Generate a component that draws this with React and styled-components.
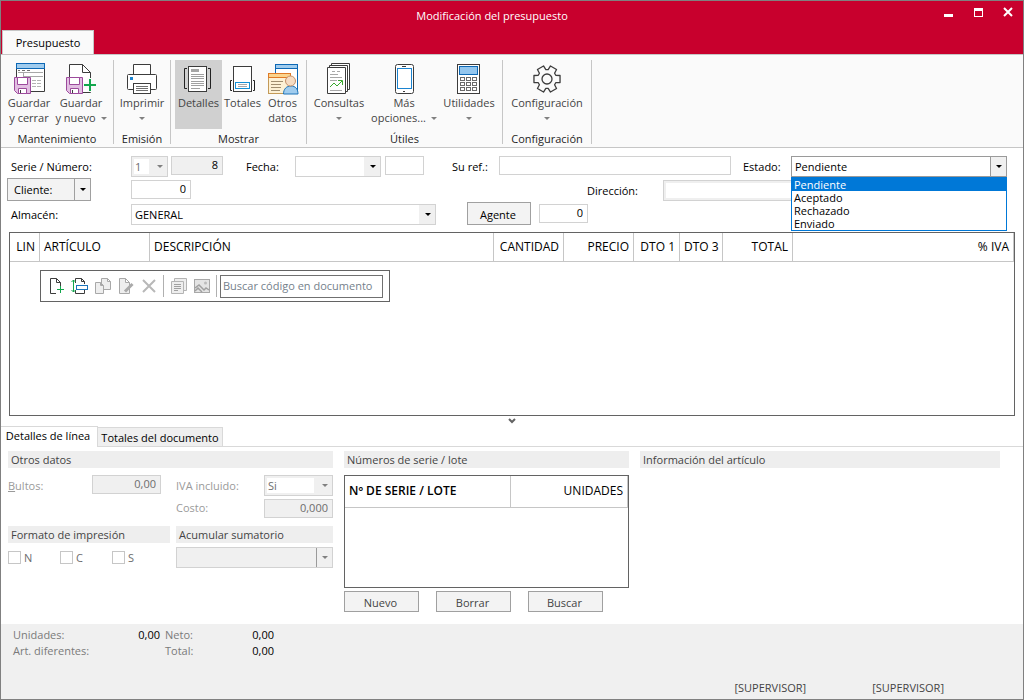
import React, { useState } from "react";
import styled, { createGlobalStyle, css } from "styled-components";

const GlobalStyle = createGlobalStyle`
* { box-sizing: border-box; }
body {
    margin: 0;
    background: #fff;
    color: #000;
    font-family: "Open Sans", "Noto Sans", sans-serif;
    font-size: 11px;
    line-height: 15px;
}
button, input, select {
    font: inherit;
    color: inherit;
    margin: 0;
    border-radius: 0;
}
button { cursor: pointer; }
`;

/* ---------- icons ---------- */

const Svg = ({ size = 34, children }) => (
    <svg width={size} height={size} viewBox={`0 0 ${size} ${size}`} fill="none" stroke="#3c3c3c" aria-hidden="true">
        {children}
    </svg>
);

const Floppy = () => (
    <g stroke="#9c4a9c">
        <path d="M2.5 16.5h16v16h-13l-3-3z" fill="#e2bfe2" />
        <path d="M5.5 16.5h10v7h-10z" fill="#fff" />
        <path d="M6.5 27.5h8v5h-8z" fill="#fff" />
        <path d="M8.5 29v3" stroke="#3c3c3c" />
    </g>
);

const SaveCloseIcon = () => (
    <Svg>
        <path d="M4.5 7v23.5h28V7" fill="#fff" />
        <rect x="4.5" y="2.5" width="28" height="5" fill="#a0ccee" stroke="#0d68b5" />
        <path d="M6 9.5h2m2 0h3m2 0h3" stroke="#707070" />
        <path d="M6 11.5h25M11.5 12v4M11 15.5h20" stroke="#a8a8a8" />
        <path d="M20 19.5h4m1 0h4M20 22.5h4m1 0h4M20 25.5h4m1 0h4" stroke="#b4b4b4" />
        <Floppy />
    </Svg>
);

const SaveNewIcon = () => (
    <Svg>
        <path d="M5.5 17V3.5h13l8 8V31.5H18" fill="#fff" />
        <path d="M18.5 3.5v8h8" />
        <Floppy />
        <path d="M26 17v14M19 24h14" stroke="#fafafa" strokeWidth="5" />
        <path d="M26 18v12M20 24h12" stroke="#12a64c" strokeWidth="2" />
    </Svg>
);

const PrinterIcon = () => (
    <Svg>
        <path d="M8.5 13V3.5h17V13" fill="#fff" />
        <rect x="2.5" y="13.5" width="29" height="15" rx="1" fill="#fff" />
        <rect x="5" y="16" width="3" height="3" fill="#1c84d0" stroke="none" />
        <rect x="8.5" y="22.5" width="17" height="10" fill="#fff" />
        <path d="M11 25.5h12M11 27.5h12M11 29.5h12" stroke="#707070" />
    </Svg>
);

const DetailsIcon = () => (
    <Svg>
        <rect x="6.5" y="5.5" width="18" height="25" fill="#fff" />
        <path d="M5 7.5H2.5v20H5M26 7.5h2.5v20H26" stroke="#222" />
        <rect x="9" y="8" width="8" height="3" fill="#a6a6a6" stroke="none" />
        <path d="M9 13.5h13M9 15.5h13M9 17.5h13M9 20.5h13M9 22.5h13M9 24.5h13M9 27.5h9" stroke="#a0a0a0" />
    </Svg>
);

const TotalsIcon = () => (
    <Svg>
        <rect x="7.5" y="5.5" width="18" height="25" fill="#fff" />
        <path d="M6 19.5H4.5v10H6M27 19.5h1.5v10H27" stroke="#222" />
        <rect x="9.5" y="21.5" width="14" height="6" stroke="#1590d6" />
        <path d="M12 23.5h9M12 25.5h9" stroke="#a8a8a8" />
    </Svg>
);

const OtherDataIcon = () => (
    <Svg>
        <rect x="9.5" y="3.5" width="22" height="26" fill="#fff" stroke="#0d68b5" />
        <rect x="9.5" y="3.5" width="22" height="4" fill="#a0ccee" stroke="#0d68b5" />
        <rect x="2.5" y="12.5" width="22" height="20" fill="#fdf1d5" stroke="#c39a58" />
        <rect x="2.5" y="12.5" width="22" height="4" fill="#fbd48d" stroke="#df7a26" />
        <path d="M5 20.5h12M5 23.5h10M5 26.5h10M5 29.5h9" stroke="#a08e70" />
        <path d="M17.5 33c0-5 3-8 7.5-8s7 3 7 8z" fill="#a0ccee" stroke="#1e74b8" />
        <circle cx="24.5" cy="20" r="5" fill="#f6dcc3" stroke="#c4916b" />
    </Svg>
);

const QueriesIcon = () => (
    <Svg>
        <path d="M9.5 2.5h18v26h-18z" fill="#fff" />
        <path d="M7.5 4.5h18v26h-18z" fill="#fff" />
        <path d="M5.5 6.5h18v26h-18z" fill="#fff" />
        <path d="M10 10.5h3m2 0h3M8 13.5h8M8 16.5h12M8 19.5h7M8 29.5h12" stroke="#a8a8a8" />
        <path d="M8 26l4-4 3 3 5-5M16 19.5h4.5V24" stroke="#3aa82f" />
    </Svg>
);

const PhoneIcon = () => (
    <Svg>
        <rect x="8.5" y="3.5" width="18" height="29" rx="2" fill="#fff" />
        <rect x="10.5" y="7.5" width="14" height="20" fill="#fff" stroke="#1c84d0" />
        <path d="M15 5.5h4M16 30.5h2" />
    </Svg>
);

const CalculatorIcon = () => (
    <Svg>
        <rect x="5.5" y="3.5" width="22" height="29" fill="#fff" />
        <rect x="7.5" y="5.5" width="18" height="8" fill="#93c6ee" stroke="#0d68b5" />
        {[16.5, 21.5, 26.5].map((y) =>
            [8.5, 14.5, 20.5].map((x) => <rect key={`${x}-${y}`} x={x} y={y} width="4" height="3" stroke="#6a6a6a" />)
        )}
    </Svg>
);

const GearIcon = () => {
    const points = [0, 60, 120, 180, 240, 300].flatMap((a) =>
        [[-23, 9.5], [-15, 13.5], [15, 13.5], [23, 9.5]].map(([d, r]) => {
            const t = ((a + d) * Math.PI) / 180;
            return `${17 + r * Math.cos(t)},${18 + r * Math.sin(t)}`;
        })
    );
    return (
        <Svg>
            <polygon points={points.join(" ")} strokeWidth="1.3" strokeLinejoin="round" />
            <circle cx="17" cy="18" r="5" strokeWidth="1.3" />
        </Svg>
    );
};

const NewLineIcon = () => (
    <Svg size={18}>
        <path d="M8 16.5H2.5v-15h6l4 4V9M8.5 1.5v4h4" />
        <path d="M12.5 9v7M9 12.5h7" stroke="#12a64c" />
    </Svg>
);

const InsertLineIcon = () => (
    <Svg size={18}>
        <path d="M4.5 6V1.5h6l3 3V7M10.5 1.5v3h3M4.5 13v3.5h9V13" />
        <path d="M2.5 3v12M.5 5l2-2 2 2M.5 13l2 2 2-2" stroke="#12a64c" />
        <rect x="5.5" y="8.5" width="11" height="4" fill="#fff" stroke="#1c74bb" />
    </Svg>
);

const CopyIcon = () => (
    <Svg size={18}>
        <g stroke="#a8a8a8" fill="#eee">
            <path d="M7.5 1.5h6l3 3v8h-9zM13.5 1.5v3h3" />
            <path d="M1.5 5.5h5l3 3v8h-8zM6.5 5.5v3h3" />
        </g>
    </Svg>
);

const EditIcon = () => (
    <Svg size={18}>
        <path d="M2.5 1.5h6l4 4v11h-10zM8.5 1.5v4h4" stroke="#a8a8a8" fill="#eee" />
        <path d="M8 14.5L15.5 7" stroke="#aaa" strokeWidth="3" />
    </Svg>
);

const DeleteIcon = () => (
    <Svg size={18}>
        <path d="M3 3l12 12M15 3L3 15" stroke="#b8b8b8" strokeWidth="2" />
    </Svg>
);

const NotesIcon = () => (
    <Svg size={18}>
        <g stroke="#b4b4b4" fill="#eee">
            <path d="M4.5 1.5h12v12h-12z" />
            <path d="M1.5 4.5h12v12h-12z" />
            <path d="M4 7.5h7M4 9.5h7M4 11.5h7M4 13.5h4" stroke="#a0a0a0" />
        </g>
    </Svg>
);

const ImageIcon = () => (
    <Svg size={18}>
        <rect x="1.5" y="2.5" width="15" height="13" fill="#e4e4e4" stroke="#a8a8a8" />
        <path d="M2 11l4-3 5 5 2-2 3 2M2 14l3-3 4 4" stroke="#a0a0a0" strokeWidth="1.5" />
        <circle cx="12.5" cy="6" r="1.5" fill="#bbb" stroke="none" />
    </Svg>
);

const Caret = styled.span`
    width: 0;
    height: 0;
    border: 3px solid transparent;
    border-top-color: ${({ $muted }) => ($muted ? "#808080" : "#000")};
    border-bottom: 0;
`;

/* ---------- window frame ---------- */

const Window = styled.div`
    min-height: 100vh;
    display: flex;
    flex-direction: column;
    border: 1px solid #808080;
    background: #fff;
`;

const TitleBar = styled.header`
    background: #c8002d;
    color: #fff;
`;

const TitleRow = styled.div`
    display: grid;
    grid-template-columns: 40px 1fr 80px;
    height: 29px;
    h1 {
        grid-column: 2;
        margin: 0;
        padding-top: 7px;
        font-size: 11px;
        font-weight: 400;
        text-align: center;
    }
`;

const WindowButtons = styled.div`
    display: flex;
    padding-top: 3px;
    button {
        flex: none;
        width: 30px;
        height: 16px;
        padding: 0;
        border: 0;
        background: none;
        text-align: left;
    }
    button:last-child { width: 20px; }
`;

const RibbonTabs = styled.nav`
    display: flex;
    padding-left: 1px;
    button {
        width: 92px;
        height: 24px;
        padding: 0;
        border: 1px solid #c6c6c6;
        border-bottom: 0;
        background: #fafafa;
        color: #000;
    }
`;

/* ---------- ribbon ---------- */

const RibbonBar = styled.div`
    display: flex;
    height: 94px;
    padding-top: 5px;
    background: #fafafa;
    border-top: 1px solid #c6c6c6;
    border-bottom: 1px solid #c6c6c6;
    margin-bottom: 8px;
`;

const Group = styled.section`
    width: ${({ $w }) => $w}px;
    height: 84px;
    border-right: 1px solid #c6c6c6;
    h2 {
        margin: 2px 0 0;
        font-size: 11px;
        font-weight: 400;
        line-height: 15px;
        text-align: center;
        color: #1e1e1e;
    }
`;

const GroupItems = styled.div`
    display: flex;
    padding-left: ${({ $pad = 3 }) => $pad}px;
`;

const RibbonItem = styled.button`
    display: flex;
    flex-direction: column;
    align-items: center;
    flex: none;
    width: ${({ $w }) => $w}px;
    height: 69px;
    padding: 1px 0 0;
    border: 0;
    background: ${({ $active }) => ($active ? "#d0d0d0" : "transparent")};
    color: #444;
    white-space: nowrap;
    svg { flex: none; }
    span.line {
        display: flex;
        align-items: center;
        justify-content: center;
        gap: 5px;
        height: 15px;
    }
    ${Caret} { margin-top: 2px; }
`;

/* ---------- form ---------- */

const disabledLook = css`
    background: #f0f0f0;
    color: #6d6d6d;
`;

const Label = styled.label`
    flex: none;
    width: ${({ $w }) => $w}px;
    padding-top: ${({ $top = 3 }) => $top}px;
    white-space: nowrap;
    color: ${({ $muted }) => ($muted ? "#9a9a9a" : "#000")};
`;

const TextBox = styled.input`
    flex: ${({ $grow }) => ($grow ? "1 1 0" : "none")};
    min-width: 0;
    width: ${({ $w }) => $w}px;
    height: ${({ $inset }) => ($inset ? 21 : 19)}px;
    padding: 0 4px 2px 1px;
    border: 1px solid #d2d2d2;
    background: #fff;
    box-shadow: ${({ $inset }) => ($inset ? "inset 0 0 0 2px #efefef" : "none")};
    outline: none;
    text-align: ${({ $grow }) => ($grow ? "left" : "right")};
    ${({ readOnly }) => readOnly && "background: #f0f0f0;"}
    &:disabled { ${disabledLook} }
`;

const ComboFrame = styled.div`
    position: relative;
    flex: none;
    display: flex;
    width: ${({ $w }) => $w}px;
    height: 21px;
    border: 1px solid ${({ $strong }) => ($strong ? "#9a9a9a" : "#d2d2d2")};
    background: ${({ $off }) => ($off ? "#f0f0f0" : "#fff")};
    select {
        flex: 1;
        min-width: 0;
        margin: ${({ $off }) => ($off ? "2px" : "0")};
        padding: 0 0 0 ${({ $off }) => ($off ? "1px" : "3px")};
        border: 0;
        outline: none;
        appearance: none;
        background: ${({ $blank }) => ($blank ? "#f0f0f0" : "#fff")};
        color: ${({ $off }) => ($off ? "#6d6d6d" : "#000")};
        opacity: 1;
    }
`;

const FormRow = styled.div`
    display: flex;
    align-items: flex-start;
    height: ${({ $low }) => ($low ? 24 : 22)}px;
    padding: 0 16px 0 10px;
    ${Label}, ${TextBox}, ${ComboFrame} {
        margin-top: ${({ $low }) => ($low ? 2 : 0)}px;
    }
`;

const ComboArrow = styled.span`
    display: flex;
    align-items: center;
    justify-content: center;
    width: 16px;
    background: #f0f0f0;
    border-left: 1px solid ${({ $line }) => ($line ? "#9a9a9a" : "#f0f0f0")};
    pointer-events: none;
`;

const OptionList = styled.ul`
    position: absolute;
    z-index: 2;
    top: 20px;
    left: -1px;
    right: -1px;
    margin: 0;
    padding: 0;
    list-style: none;
    background: #fff;
    border: 1px solid #0078d7;
    li {
        padding-left: 2px;
        line-height: 13px;
        &[aria-selected="true"] {
            background: #0078d7;
            color: #fff;
        }
    }
`;

const PushButton = styled.button`
    flex: none;
    width: ${({ $w = 75 }) => $w}px;
    height: ${({ $h = 21 }) => $h}px;
    padding: 1px 2px 0 0;
    border: 1px solid #a0a0a0;
    background: #f3f3f3;
    color: ${({ $soft }) => ($soft ? "#444" : "#000")};
`;

const SplitButton = styled.div`
    flex: none;
    display: flex;
    width: 84px;
    height: 23px;
    margin: 0 40px 0 -4px;
    border: 1px solid #a0a0a0;
    button {
        display: flex;
        align-items: center;
        padding: 0 6px;
        border: 0;
        background: #f3f3f3;
    }
    button:first-child { flex: 1; }
    button:last-child {
        width: 16px;
        padding: 0;
        justify-content: center;
        border-left: 1px solid #a0a0a0;
    }
`;

const Space = styled.span`
    flex: none;
    width: ${({ $w }) => $w}px;
`;

/* ---------- tables ---------- */

const GridBox = styled.div`
    flex: ${({ $grow }) => ($grow ? "1 0 184px" : "0 0 113px")};
    margin: ${({ $grow }) => ($grow ? "6px 8px 0" : "0")};
    border: 1px solid #636363;
    table {
        width: 100%;
        border-collapse: separate;
        border-spacing: 0;
        table-layout: fixed;
    }
    th {
        height: ${({ $grow }) => ($grow ? 29 : 32)}px;
        padding: 0 4px 2px;
        border-right: 1px solid #c6c6c6;
        border-bottom: 1px solid #c6c6c6;
        font-size: 12px;
        font-weight: 400;
        text-align: right;
        white-space: nowrap;
    }
    th.left { text-align: left; }
    th.key { font-weight: 600; }
`;

const LineTools = styled.div`
    display: flex;
    align-items: center;
    width: 350px;
    height: 32px;
    margin: 8px 0 0 30px;
    padding: 0 6px 0 4px;
    border: 1px solid #636363;
    button {
        flex: none;
        display: flex;
        justify-content: center;
        width: 23px;
        padding: 0;
        border: 0;
        background: none;
    }
    hr {
        flex: none;
        width: 1px;
        height: 22px;
        margin: 0 3px;
        border: 0;
        background: #b0b0b0;
    }
    input {
        flex: 1;
        min-width: 0;
        height: 23px;
        padding: 0 2px 2px;
        border: 1px solid #707070;
        outline: none;
        &::placeholder { color: #75818c; opacity: 1; }
    }
`;

const Splitter = styled.div`
    flex: none;
    height: 10px;
    display: flex;
    justify-content: center;
    padding-top: 2px;
`;

/* ---------- lower pane ---------- */

const PaneTabs = styled.div`
    display: flex;
    align-items: flex-end;
    height: 21px;
    border-bottom: 1px solid #d9d9d9;
`;

const PaneTab = styled.button`
    height: ${({ $active }) => ($active ? 21 : 19)}px;
    width: ${({ $w }) => $w}px;
    margin-bottom: ${({ $active }) => ($active ? "-1px" : "0")};
    padding: 0 ${({ $active }) => ($active ? "2px 4px" : "0 0")} 0;
    border: 1px solid #d9d9d9;
    border-width: 1px 1px 0 0;
    background: ${({ $active }) => ($active ? "#fff" : "#efefef")};
    white-space: nowrap;
`;

const Pane = styled.div`
    display: grid;
    grid-template-columns: 325px 285px minmax(0, 360px);
    column-gap: 11px;
    height: 177px;
    padding: 4px 23px 0 7px;
`;

const Column = styled.section`
    display: flex;
    flex-direction: column;
`;

const Heading = styled.h3`
    margin: 0 0 ${({ $gap = 7 }) => $gap}px;
    padding-left: 3px;
    height: 17px;
    background: #eee;
    color: #444;
    font-size: 11px;
    font-weight: 400;
    line-height: 17px;
`;

const FieldLine = styled.div`
    display: flex;
    align-items: flex-start;
    height: ${({ $h }) => $h}px;
    justify-content: flex-end;
`;

const Halves = styled.div`
    display: grid;
    grid-template-columns: 162px 1fr;
    column-gap: 6px;
`;

const Checks = styled.div`
    display: flex;
    padding-top: 4px;
    label {
        display: flex;
        align-items: center;
        gap: 3px;
        width: 52px;
        height: 13px;
        color: #6d6d6d;
    }
    input {
        appearance: none;
        width: 13px;
        height: 13px;
        border: 1px solid #c6c6c6;
        background: #fff;
    }
`;

const ButtonLine = styled.div`
    display: flex;
    gap: 17px;
    padding-top: 3px;
`;

const Footer = styled.footer`
    display: flex;
    flex-direction: column;
    justify-content: space-between;
    height: 75px;
    padding: 3px 79px 4px 12px;
    background: #f0f0f0;
`;

const Totals = styled.dl`
    display: grid;
    grid-template-columns: 86px 61px 50px 64px;
    margin: 0;
    line-height: 16px;
    dt { color: #7a7a7a; white-space: nowrap; }
    dt.second { padding-left: 5px; }
    dd { margin: 0; text-align: right; }
`;

const Users = styled.div`
    display: flex;
    justify-content: flex-end;
    color: #444;
    gap: 66px;
`;

const Combo = ({ id, w, value, off, blank, strong, line, children, label }) => (
    <ComboFrame $w={w} $off={off} $blank={blank} $strong={strong}>
        <select id={id} disabled={off} aria-label={label} defaultValue={value}>
            <option>{value}</option>
        </select>
        <ComboArrow $line={line}><Caret $muted={off} /></ComboArrow>
        {children}
    </ComboFrame>
);

const ribbon = [
    {
        name: "Mantenimiento", w: 113, pad: 2,
        items: [
            { lines: ["Guardar", "y cerrar"], icon: <SaveCloseIcon />, w: 52 },
            { lines: ["Guardar", "y nuevo"], icon: <SaveNewIcon />, w: 52, arrow: true },
        ],
    },
    { name: "Emisión", w: 57, items: [{ lines: ["Imprimir", ""], icon: <PrinterIcon />, w: 50, arrow: true }] },
    {
        name: "Mostrar", w: 136, pad: 4,
        items: [
            { lines: ["Detalles"], icon: <DetailsIcon />, w: 47, active: true },
            { lines: ["Totales"], icon: <TotalsIcon />, w: 41 },
            { lines: ["Otros", "datos"], icon: <OtherDataIcon />, w: 39 },
        ],
    },
    {
        name: "Útiles", w: 196,
        items: [
            { lines: ["Consultas", ""], icon: <QueriesIcon />, w: 58, arrow: true },
            { lines: ["Más", "opciones..."], icon: <PhoneIcon />, w: 72, arrow: true },
            { lines: ["Utilidades", ""], icon: <CalculatorIcon />, w: 58, arrow: true },
        ],
    },
    { name: "Configuración", w: 89, items: [{ lines: ["Configuración", ""], icon: <GearIcon />, w: 82, arrow: true }] },
];

const columns = [
    ["LIN", 30], ["ARTÍCULO", 110, "left"], ["DESCRIPCIÓN", undefined, "left"], ["CANTIDAD", 70], ["PRECIO", 70],
    ["DTO 1", 46], ["DTO 3", 43], ["TOTAL", 70], ["% IVA", 221],
];

const estados = ["Pendiente", "Aceptado", "Rechazado", "Enviado"];

const App = () => {
    const [estado, setEstado] = useState("Pendiente");
    const [tab, setTab] = useState("linea");

    return (
        <>
            <GlobalStyle />
            <Window>
                <TitleBar>
                    <TitleRow>
                        <h1>Modificación del presupuesto</h1>
                        <WindowButtons>
                            <button aria-label="Minimizar">
                                <svg width="11" height="16"><path d="M1 10h9v3H1z" fill="#fff" /></svg>
                            </button>
                            <button aria-label="Maximizar">
                                <svg width="11" height="16"><path d="M1 4h9v9H1zM2 7v5h7V7z" fill="#fff" fillRule="evenodd" /></svg>
                            </button>
                            <button aria-label="Cerrar">
                                <svg width="12" height="16"><path d="M1 4l8 8M9 4l-8 8" stroke="#fff" strokeWidth="2" /></svg>
                            </button>
                        </WindowButtons>
                    </TitleRow>
                    <RibbonTabs>
                        <button>Presupuesto</button>
                    </RibbonTabs>
                </TitleBar>

                <RibbonBar>
                    {ribbon.map((group) => (
                        <Group key={group.name} $w={group.w}>
                            <GroupItems $pad={group.pad}>
                                {group.items.map((item) => (
                                    <RibbonItem key={item.lines.join()} $w={item.w} $active={item.active}>
                                        {item.icon}
                                        {item.lines.map((line, i) => (
                                            <span className="line" key={i}>
                                                {line}
                                                {item.arrow && i === 1 && <Caret $muted />}
                                            </span>
                                        ))}
                                    </RibbonItem>
                                ))}
                            </GroupItems>
                            <h2>{group.name}</h2>
                        </Group>
                    ))}
                </RibbonBar>

                <FormRow>
                    <Label htmlFor="serie" $w={120}>Serie / Número:</Label>
                    <Combo id="serie" w={37} value="1" off />
                    <Space $w={3} />
                    <TextBox $w={52} defaultValue="8" readOnly aria-label="Número" />
                    <Space $w={23} />
                    <Label htmlFor="fecha" $w={49}>Fecha:</Label>
                    <Combo id="fecha" w={86} value="" />
                    <Space $w={4} />
                    <TextBox $w={39} aria-label="Hora" />
                    <Space $w={28} />
                    <Label htmlFor="ref" $w={47}>Su ref.:</Label>
                    <TextBox id="ref" $grow />
                    <Space $w={12} />
                    <Label htmlFor="estado" $w={48}>Estado:</Label>
                    <Combo id="estado" w={216} value={estado} key={estado} strong line>
                        <OptionList role="listbox" aria-label="Estado">
                            {estados.map((e) => (
                                <li key={e} role="option" aria-selected={e === estado} onClick={() => setEstado(e)}>{e}</li>
                            ))}
                        </OptionList>
                    </Combo>
                </FormRow>
                <FormRow $low>
                    <SplitButton>
                        <button>Cliente:</button>
                        <button aria-label="Opciones de cliente"><Caret /></button>
                    </SplitButton>
                    <TextBox $w={60} defaultValue="0" aria-label="Cliente" />
                    <Space $w={396} />
                    <Label htmlFor="direccion" $w={76}>Dirección:</Label>
                    <TextBox id="direccion" $grow $inset />
                </FormRow>
                <FormRow $low>
                    <Label htmlFor="almacen" $w={120}>Almacén:</Label>
                    <Combo id="almacen" w={305} value="GENERAL" />
                    <Space $w={31} />
                    <PushButton $w={64} $h={23}>Agente</PushButton>
                    <Space $w={8} />
                    <TextBox $w={49} defaultValue="0" aria-label="Agente" />
                </FormRow>

                <GridBox $grow>
                    <table>
                        <thead>
                            <tr>
                                {columns.map(([name, width, align]) => (
                                    <th key={name} className={align} style={{ width }}>{name}</th>
                                ))}
                            </tr>
                        </thead>
                    </table>
                    <LineTools>
                        <button aria-label="Nueva línea"><NewLineIcon /></button>
                        <button aria-label="Insertar línea"><InsertLineIcon /></button>
                        <button aria-label="Duplicar"><CopyIcon /></button>
                        <button aria-label="Editar"><EditIcon /></button>
                        <button aria-label="Eliminar"><DeleteIcon /></button>
                        <hr />
                        <button aria-label="Notas"><NotesIcon /></button>
                        <button aria-label="Imagen"><ImageIcon /></button>
                        <hr />
                        <input placeholder="Buscar código en documento" aria-label="Buscar código en documento" />
                    </LineTools>
                </GridBox>
                <Splitter>
                    <svg width="8" height="6"><path d="M1 1l3 3 3-3" stroke="#636363" strokeWidth="2" fill="none" /></svg>
                </Splitter>

                <PaneTabs role="tablist">
                    <PaneTab role="tab" $w={97} $active={tab === "linea"} onClick={() => setTab("linea")}>Detalles de línea</PaneTab>
                    <PaneTab role="tab" $w={125} $active={tab === "totales"} onClick={() => setTab("totales")}>Totales del documento</PaneTab>
                </PaneTabs>
                <Pane>
                    <Column>
                        <Heading>Otros datos</Heading>
                        <FieldLine $h={24}>
                            <Label htmlFor="bultos" $w={84} $muted><u>B</u>ultos:</Label>
                            <TextBox id="bultos" $w={69} defaultValue="0,00" disabled />
                            <Space $w={15} />
                            <Label htmlFor="iva" $w={88} $muted>IVA incluido:</Label>
                            <Combo id="iva" w={69} value="Si" off />
                        </FieldLine>
                        <FieldLine $h={27}>
                            <Label htmlFor="costo" $w={88} $top={1} $muted>Costo:</Label>
                            <TextBox id="costo" $w={69} defaultValue="0,000" disabled />
                        </FieldLine>
                        <Halves>
                            <div>
                                <Heading $gap={4}>Formato de impresión</Heading>
                                <Checks>
                                    <label><input type="checkbox" />N</label>
                                    <label><input type="checkbox" />C</label>
                                    <label><input type="checkbox" />S</label>
                                </Checks>
                            </div>
                            <div>
                                <Heading $gap={4}>Acumular sumatorio</Heading>
                                <Combo w={157} value="" off blank line label="Acumular sumatorio" />
                            </div>
                        </Halves>
                    </Column>
                    <Column>
                        <Heading>Números de serie / lote</Heading>
                        <GridBox>
                            <table>
                                <thead>
                                    <tr>
                                        <th className="left key" style={{ width: 166 }}>Nº DE SERIE / LOTE</th>
                                        <th>UNIDADES</th>
                                    </tr>
                                </thead>
                            </table>
                        </GridBox>
                        <ButtonLine>
                            <PushButton $soft>Nuevo</PushButton>
                            <PushButton $soft>Borrar</PushButton>
                            <PushButton $soft>Buscar</PushButton>
                        </ButtonLine>
                    </Column>
                    <Column>
                        <Heading>Información del artículo</Heading>
                    </Column>
                </Pane>

                <Footer>
                    <Totals>
                        <dt>Unidades:</dt><dd>0,00</dd>
                        <dt className="second">Neto:</dt><dd>0,00</dd>
                        <dt>Art. diferentes:</dt><dd></dd>
                        <dt className="second">Total:</dt><dd>0,00</dd>
                    </Totals>
                    <Users>
                        <span>[SUPERVISOR]</span>
                        <span>[SUPERVISOR]</span>
                    </Users>
                </Footer>
            </Window>
        </>
    );
};

export default App;
